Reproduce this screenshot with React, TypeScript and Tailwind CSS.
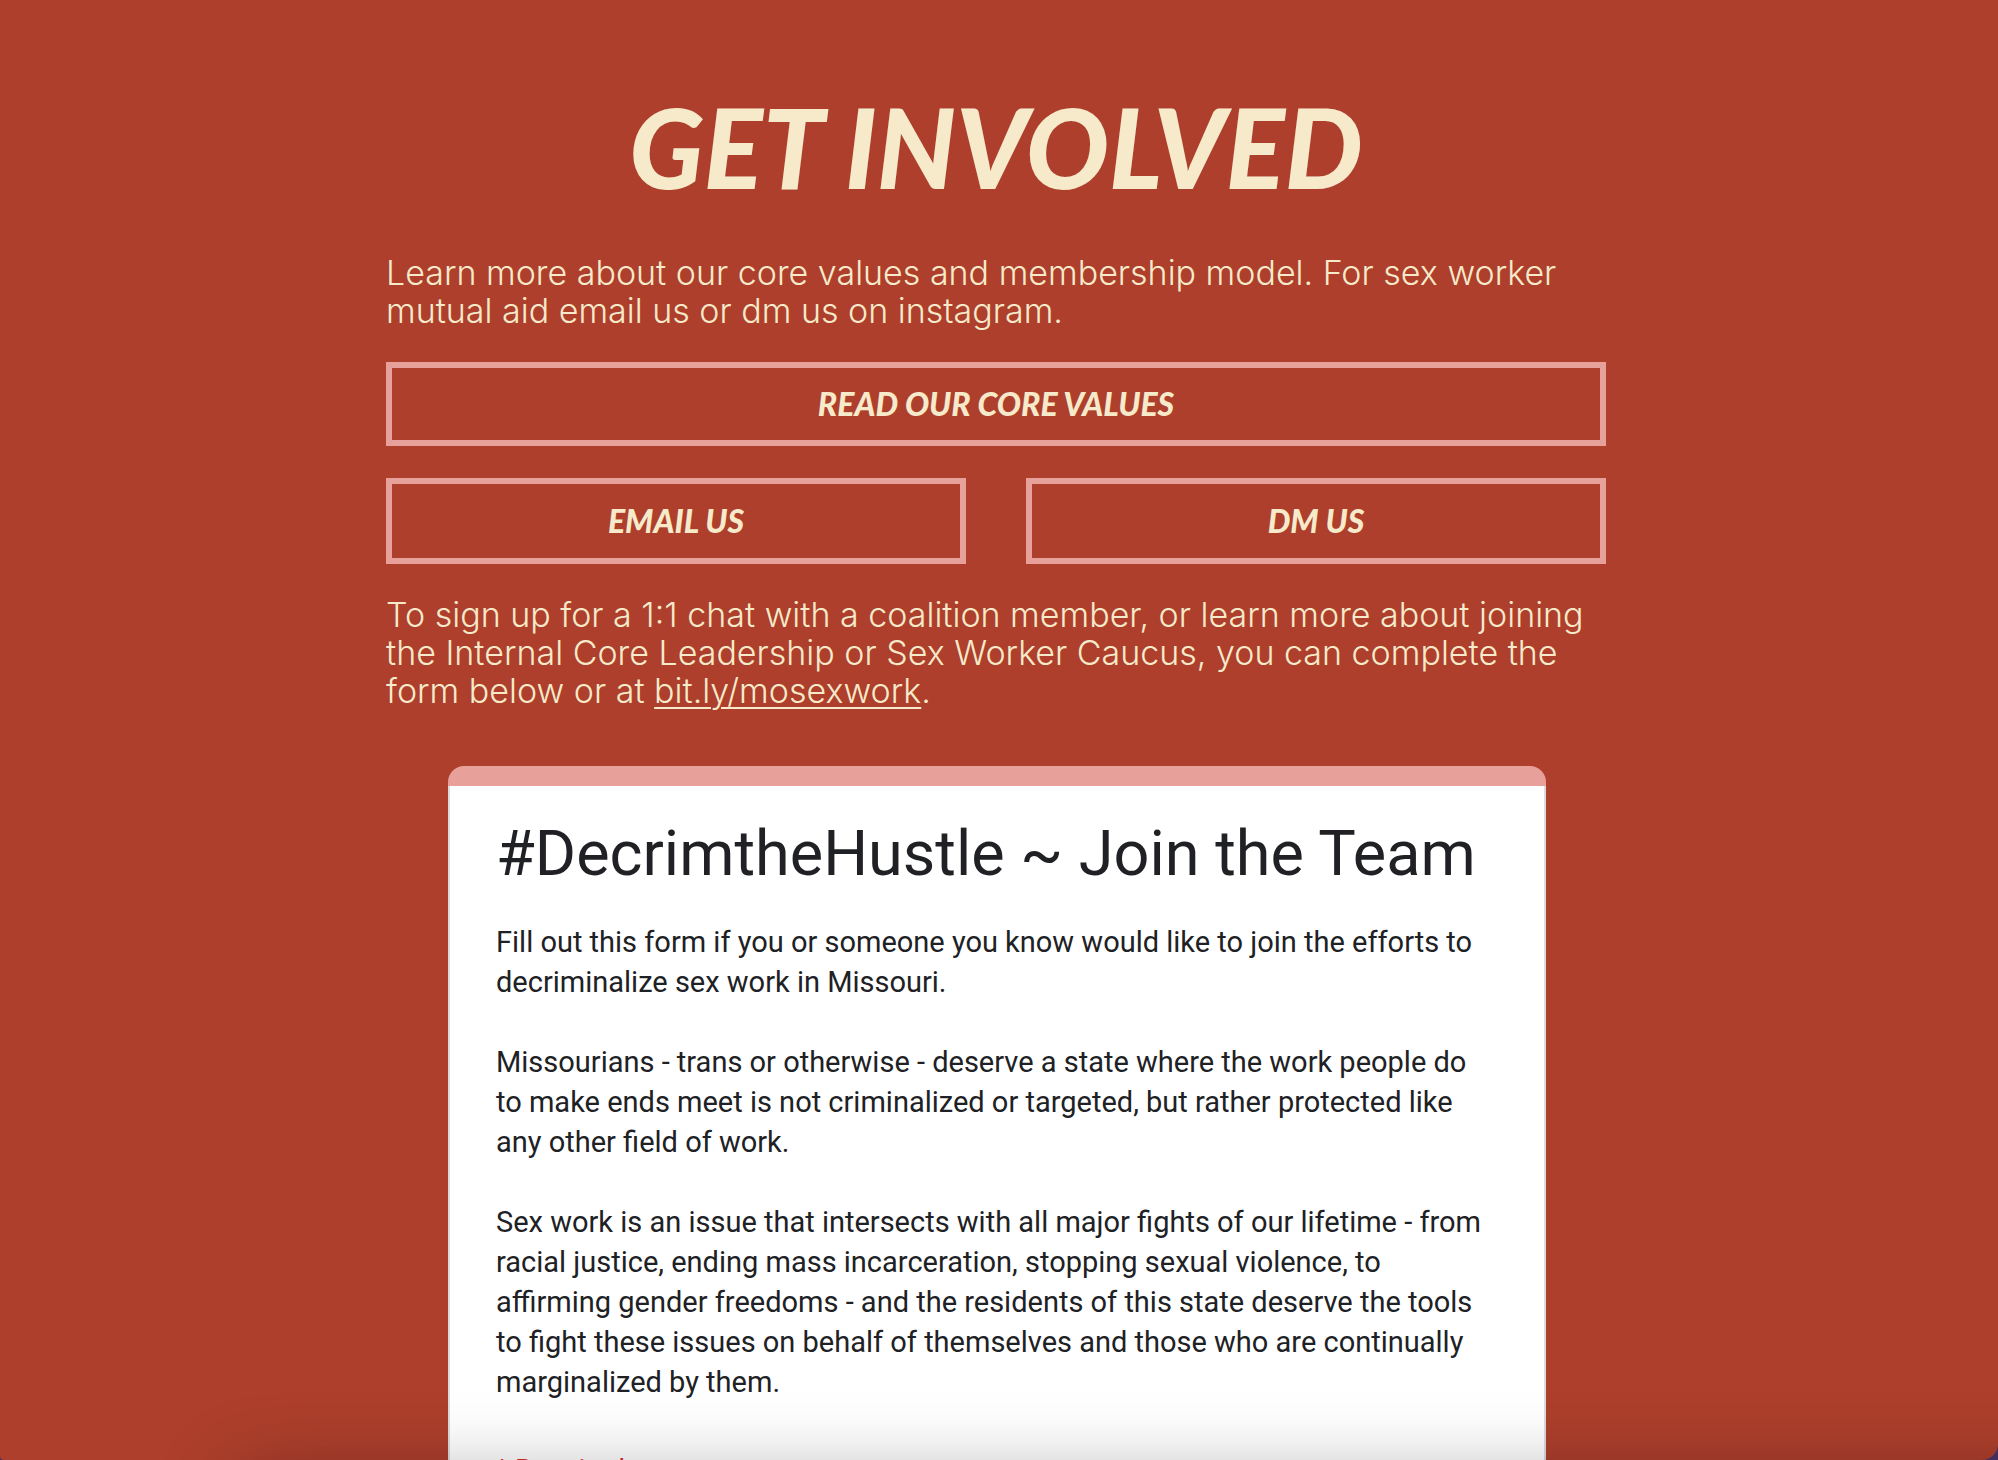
import type { ReactNode } from "react";

const paragraphs = [
  "Fill out this form if you or someone you know would like to join the efforts to decriminalize sex work in Missouri.",
  "Missourians - trans or otherwise - deserve a state where the work people do to make ends meet is not criminalized or targeted, but rather protected like any other field of work.",
  "Sex work is an issue that intersects with all major fights of our lifetime - from racial justice, ending mass incarceration, stopping sexual violence, to affirming gender freedoms - and the residents of this state deserve the tools to fight these issues on behalf of themselves and those who are continually marginalized by them.",
];

function OutlineButton({ children, className }: { children: ReactNode; className: string }) {
  return (
    <button
      type="button"
      className={`flex w-full items-center justify-center border-6 border-[#e8a09a] font-['Lato',sans-serif] text-[32px] font-black uppercase italic text-[#f6eaca] ${className}`}
    >
      {children}
    </button>
  );
}

export default function App() {
  return (
    <div className="h-screen overflow-hidden bg-[#43305f]">
      <div className="relative h-full overflow-hidden rounded-br-2xl rounded-bl-sm bg-[#ad3f2c]">
        <main className="mx-auto flex w-full max-w-[1226px] flex-col pt-20 pr-1.5 text-[#f6eaca]">
          <h1 className="text-center font-['Lato',sans-serif] text-[110px] leading-[132px] font-black uppercase italic">
            Get Involved
          </h1>

          <section className="mt-[42px] flex flex-col gap-8 font-['Inter',sans-serif] text-[34px] leading-[38px] font-light">
            <p>
              Learn more about our core values and membership model. For sex worker mutual aid email us
              or dm us on instagram.
            </p>
            <OutlineButton className="h-[84px]">Read our core values</OutlineButton>
            <div className="grid grid-cols-2 gap-[60px]">
              <OutlineButton className="h-[86px]">Email us</OutlineButton>
              <OutlineButton className="h-[86px]">DM us</OutlineButton>
            </div>
            <p>
              To sign up for a 1:1 chat with a coalition member, or learn more about joining the Internal
              Core Leadership or Sex Worker Caucus, you can complete the form below or at{" "}
              <a href="https://bit.ly/mosexwork" className="underline decoration-2 underline-offset-4">
                bit.ly/mosexwork
              </a>
              .
            </p>
          </section>

          <article className="mt-14 mr-[60px] ml-[62px] overflow-hidden rounded-t-2xl font-['Roboto',sans-serif] text-[#202124]">
            <div className="h-5 bg-[#e8a09a]" />
            <div className="border-x-2 border-[#dadce0] bg-white px-11.5 pt-7 pb-10">
              <h2 className="text-[63px] leading-[80px]">#DecrimtheHustle ~ Join the Team</h2>
              <div className="mt-7 flex flex-col gap-10 text-[29px] leading-10">
                {paragraphs.map((text) => (
                  <p key={text}>{text}</p>
                ))}
              </div>
              <p className="mt-12 text-[28px] leading-10 text-[#d93025]">* Required</p>
            </div>
          </article>
        </main>

        {/* Soft shadow rising from below the lower edge of the window */}
        <div className="pointer-events-none absolute inset-x-0 bottom-0 h-24 overflow-hidden">
          <div className="absolute top-[116px] -right-40 left-60 h-40 shadow-[0_0_80px_rgba(0,0,0,0.35)]" />
        </div>
      </div>
    </div>
  );
}
